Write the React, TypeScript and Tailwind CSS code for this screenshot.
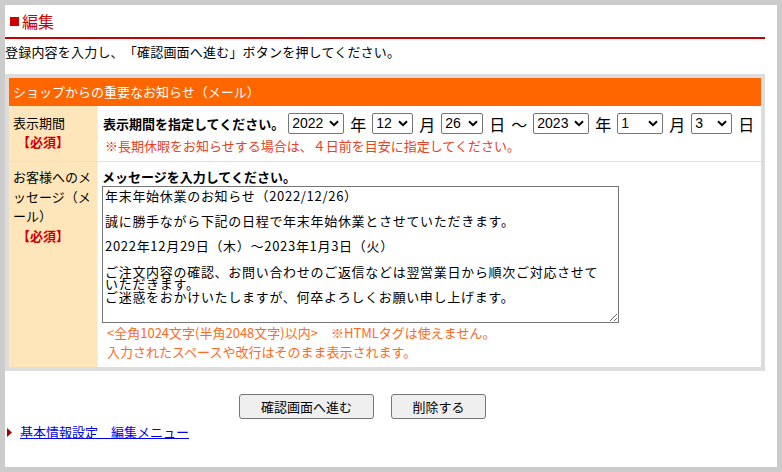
import React from 'react';

const jp = "font-['Noto_Sans_CJK_JP',sans-serif]";

function Sel({ value, className }: { value: string; className: string }) {
    return (
        <div className={`relative h-[21px] ${className}`}>
            <select
                defaultValue={value}
                className="h-[21px] w-full appearance-none rounded-[2px] border border-[#767676] bg-white pl-[3px] font-['Liberation_Sans',sans-serif] text-[14px] leading-[19px] text-black"
            >
                <option>{value}</option>
            </select>
            <svg className="pointer-events-none absolute right-[5px] top-[7px]" width="10" height="7" viewBox="0 0 10 7">
                <path d="M1 1.2l4 4 4-4" stroke="#000" strokeWidth="2" fill="none" />
            </svg>
        </div>
    );
}

const message = `年末年始休業のお知らせ（2022/12/26）

誠に勝手ながら下記の日程で年末年始休業とさせていただきます。

2022年12月29日（木）～2023年1月3日（火）

ご注文内容の確認、お問い合わせのご返信などは翌営業日から順次ご対応させていただきます。
ご迷惑をおかけいたしますが、何卒よろしくお願い申し上げます。`;

export default function App() {
    return (
        <div className={`h-[472px] w-[782px] bg-[#cccccc] p-[5px] [text-spacing-trim:space-all] ${jp}`}>
            <div className="h-full w-full bg-white">
                <div className="w-[760px]">
                    {/* title */}
                    <div className="flex h-[34px] items-center border-b-2 border-[#cc0000] pl-[5px] text-[16px] leading-[20px] text-[#cc0000]">
                        <span className="mr-[3px] inline-block h-[9px] w-[9px] bg-[#cc0000]" />
                        編集
                    </div>
                    <p className="mt-[5px] text-[13px] leading-[16px] tracking-[0.2px] text-black">
                        登録内容を入力し、「確認画面へ進む」ボタンを押してください。
                    </p>

                    {/* form table */}
                    <div className="mt-[14px] border-4 border-[#dddddd] text-[13px] text-black">
                        <div className="flex h-[28px] items-center bg-[#ff6600] pl-[4px] leading-[16px] text-white">
                            ショップからの重要なお知らせ（メール）
                        </div>

                        <div className="flex">
                            <div className="w-[88px] shrink-0 bg-[#ffe6ba] pb-[6px] pl-[4px] pt-[7px] leading-[19px]">
                                <div>表示期間</div>
                                <div className="ml-[4px] font-bold text-[#cc0000]">【必須】</div>
                            </div>
                            <div className="flex-1 border-l border-[#f2f2f2] pb-[7px] pl-[5px] pt-[7px]">
                                <div className="flex items-center gap-[6px]">
                                    <span className="mr-[-2px] font-bold leading-[16px]">表示期間を指定してください。</span>
                                    <Sel value="2022" className="w-[56px]" />
                                    <span className="text-[16px] leading-[20px]">年</span>
                                    <Sel value="12" className="w-[41px]" />
                                    <span className="text-[16px] leading-[20px]">月</span>
                                    <Sel value="26" className="w-[42px]" />
                                    <span className="text-[16px] leading-[20px]">日</span>
                                    <span className="text-[16px] leading-[20px]">～</span>
                                    <Sel value="2023" className="w-[56px]" />
                                    <span className="text-[16px] leading-[20px]">年</span>
                                    <Sel value="1" className="w-[46px]" />
                                    <span className="text-[16px] leading-[20px]">月</span>
                                    <Sel value="3" className="w-[41px]" />
                                    <span className="text-[16px] leading-[20px]">日</span>
                                </div>
                                <p className="mt-[4px] pl-[2px] leading-[16px] text-[#ec4020]">
                                    ※長期休暇をお知らせする場合は、４日前を目安に指定してください。
                                </p>
                            </div>
                        </div>

                        <div className="flex border-t border-[#e2e2e2]">
                            <div className="w-[88px] shrink-0 bg-[#ffe6ba] py-[5px] pl-[4px] pr-[2px] leading-[19.5px]">
                                <div>お客様へのメッセージ（メール）</div>
                                <div className="ml-[4px] font-bold text-[#cc0000]">【必須】</div>
                            </div>
                            <div className="flex-1 border-l border-[#f2f2f2] pb-[6px] pl-[4px] pt-[7px]">
                                <p className="font-bold leading-[16px]">メッセージを入力してください。</p>
                                <textarea
                                    defaultValue={message}
                                    className="mt-[1px] block h-[137px] w-[517px] border border-[#767676] bg-white pb-[2px] pl-[2px] pr-[13px] pt-[3px] text-[13px] leading-[12.6px] tracking-[0.7px] text-black"
                                />
                                <div className="pl-[5px] leading-[19px] text-[#ff6a1a]">
                                    <p>&lt;全角1024文字(半角2048文字)以内&gt;　※HTMLタグは使えません。</p>
                                    <p>入力されたスペースや改行はそのまま表示されます。</p>
                                </div>
                            </div>
                        </div>
                    </div>

                    {/* buttons */}
                    <div className="mt-[23px] flex gap-[17px] pl-[234px]">
                        <button className="h-[25px] w-[135px] rounded-[3px] border border-[#767676] bg-[#efefef] text-[13px] leading-[16px] text-black">
                            確認画面へ進む
                        </button>
                        <button className="h-[25px] w-[95px] rounded-[3px] border border-[#767676] bg-[#efefef] text-[13px] leading-[16px] text-black">
                            削除する
                        </button>
                    </div>

                    {/* menu link */}
                    <div className="mt-[5px] flex items-center pl-[2px] text-[13px] leading-[16px]">
                        <svg width="5" height="9" viewBox="0 0 5 9" className="mr-[8px]">
                            <path d="M0 0L5 4.5L0 9Z" fill="#aa0000" />
                        </svg>
                        <a href="#" className="text-[#0000ee] underline">
                            基本情報設定　編集メニュー
                        </a>
                    </div>
                </div>
            </div>
        </div>
    );
}
